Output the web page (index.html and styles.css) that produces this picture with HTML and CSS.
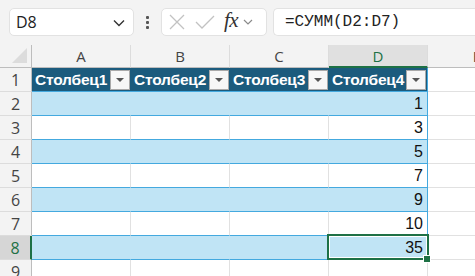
FILE: index.html
```html
<!DOCTYPE html>
<html lang="ru">
<head>
<meta charset="utf-8">
<link rel="stylesheet" href="styles.css">
</head>
<body>
<div class="toolbar">
  <div class="namebox">
    <span class="name">D8</span>
    <svg class="chev" width="12" height="8" viewBox="0 0 12 8"><path d="M1 1.5 L6 6.5 L11 1.5" fill="none" stroke="#333" stroke-width="1.4"/></svg>
  </div>
  <div class="dots"><i></i><i></i><i></i></div>
  <div class="fbtns">
    <svg width="16" height="16" viewBox="0 0 16 16"><path d="M1 1 L15 15 M15 1 L1 15" stroke="#c2c2c2" stroke-width="1.3" fill="none"/></svg>
    <svg width="20" height="16" viewBox="0 0 20 16"><path d="M1 8 L7 14 L19 2" stroke="#c2c2c2" stroke-width="1.3" fill="none"/></svg>
    <span class="fx">fx</span>
    <svg class="chev2" width="10" height="6" viewBox="0 0 10 6"><path d="M1 1 L5 5 L9 1" fill="none" stroke="#8a8a8a" stroke-width="1.2"/></svg>
  </div>
  <div class="formula">=СУММ(D2:D7)</div>
</div>
<div class="sheet">
  <div class="corner"><span class="tri"></span></div>
  <div class="ch">A</div><div class="ch">B</div><div class="ch">C</div><div class="ch sel">D</div><div class="ch">E</div>

  <div class="rh">1</div>
  <div class="th">Столбец1<span class="fb"></span></div>
  <div class="th">Столбец2<span class="fb"></span></div>
  <div class="th">Столбец3<span class="fb"></span></div>
  <div class="th last">Столбец4<span class="fb"></span></div>
  <div class="c"></div>

  <div class="rh">2</div>
  <div class="tc band"></div><div class="tc band"></div><div class="tc band"></div><div class="tc band last">1</div><div class="c"></div>

  <div class="rh">3</div>
  <div class="tc"></div><div class="tc"></div><div class="tc"></div><div class="tc last">3</div><div class="c"></div>

  <div class="rh">4</div>
  <div class="tc band"></div><div class="tc band"></div><div class="tc band"></div><div class="tc band last">5</div><div class="c"></div>

  <div class="rh">5</div>
  <div class="tc"></div><div class="tc"></div><div class="tc"></div><div class="tc last">7</div><div class="c"></div>

  <div class="rh">6</div>
  <div class="tc band"></div><div class="tc band"></div><div class="tc band"></div><div class="tc band last">9</div><div class="c"></div>

  <div class="rh">7</div>
  <div class="tc"></div><div class="tc"></div><div class="tc"></div><div class="tc last">10</div><div class="c"></div>

  <div class="rh rsel">8</div>
  <div class="tc band"></div><div class="tc band"></div><div class="tc band"></div><div class="tc band last active">35<span class="handle"></span></div><div class="c"></div>

  <div class="rh">9</div>
  <div class="c"></div><div class="c"></div><div class="c"></div><div class="c"></div><div class="c"></div>
</div>
</body>
</html>
```

FILE: styles.css
```css
html, body { margin: 0; padding: 0; }
body {
  width: 475px; height: 276px; overflow: hidden;
  background: #fff;
  font-family: "Liberation Sans", Arial, sans-serif;
}
.toolbar {
  height: 45px;
  background: #f3f3f3;
  display: flex;
  align-items: flex-start;
  padding-top: 8px;
  box-sizing: border-box;
}
.namebox {
  margin-left: 9px;
  width: 125px; height: 28px;
  box-sizing: border-box;
  background: #fff;
  border: 1px solid #e2e2e2;
  border-radius: 5px;
  display: flex; align-items: center; justify-content: space-between;
  padding: 0 8px 0 6px;
}
.name { font-family: "Open Sans", sans-serif; font-size: 16px; color: #222; }
.chev { margin-top: 1px; }
.dots {
  width: 27px; height: 28px;
  display: flex; flex-direction: column; align-items: center; justify-content: center; gap: 2px;
}
.dots i { display: block; width: 3px; height: 3px; background: #555; border-radius: 1px; }
.fbtns {
  width: 106px; height: 28px;
  box-sizing: border-box;
  background: #fff;
  border: 1px solid #e2e2e2;
  border-radius: 5px;
  display: flex; align-items: center;
  padding-left: 7px; gap: 10px;
}
.fx {
  font-family: "Liberation Serif", serif; font-style: italic;
  font-size: 21px; color: #333; margin-left: -1px; margin-top: -3px;
  letter-spacing: -0.5px;
}
.chev2 { margin-left: -5px; }
.formula {
  margin-left: 6px;
  flex: 1;
  height: 28px;
  box-sizing: border-box;
  background: #fff;
  border: 1px solid #e2e2e2;
  border-right: none;
  border-radius: 5px 0 0 5px;
  font-family: "Liberation Mono", monospace;
  font-size: 16px; color: #222;
  padding-left: 11px;
  line-height: 27px;
}
.sheet {
  display: grid;
  grid-template-columns: 32px 99px 99px 99px 99px 99px;
  grid-template-rows: 23px repeat(9, 24px);
}
.sheet > div { box-sizing: border-box; }
.corner {
  background: #f3f3f3;
  border-right: 1px solid #bdbdbd;
  border-bottom: 1px solid #bdbdbd;
  position: relative;
}
.tri {
  position: absolute; right: 4px; bottom: 4px;
  width: 0; height: 0;
  border-left: 15px solid transparent;
  border-bottom: 15px solid #dcdcdc;
}
.ch {
  background: #f3f3f3;
  border-right: 1px solid #dcdcdc;
  border-bottom: 1px solid #bdbdbd;
  font-family: "Open Sans", sans-serif;
  font-size: 15px; color: #444;
  text-align: center; line-height: 22px;
}
.ch.sel {
  background: #e0e0e0;
  color: #1e7145;
  border-bottom: 2px solid #1e7145;
}
.rh {
  background: #f3f3f3;
  border-right: 1px solid #bdbdbd;
  border-bottom: 1px solid #dcdcdc;
  font-family: "Open Sans", sans-serif;
  font-size: 16px; color: #444;
  text-align: center; line-height: 24px;
}
.rh.rsel {
  background: #d6d6d6;
  color: #1e7145;
  border-right: 2px solid #1e7145;
}
.c {
  border-right: 1px solid #e1e1e1;
  border-bottom: 1px solid #e1e1e1;
}
.th {
  background: #1b5b7d;
  border-bottom: 1px solid #44a9df;
  color: #fff;
  font-weight: bold;
  font-size: 15.5px;
  letter-spacing: -0.2px;
  display: flex; align-items: center; justify-content: space-between;
  padding: 0 1px 0 3px;
}
.th.last { border-right: 1px solid #44a9df; }
.fb {
  width: 20px; height: 20px;
  flex: none;
  box-sizing: border-box;
  background: #f7f7f7;
  border: 1px solid #a9a9a9;
  position: relative;
}
.fb::after {
  content: "";
  position: absolute; left: 5px; top: 7px;
  border-left: 4px solid transparent;
  border-right: 4px solid transparent;
  border-top: 4px solid #555;
}
.tc {
  border-right: 1px solid #e1e1e1;
  border-bottom: 1px solid #44a9df;
  font-size: 16px; color: #111;
  text-align: right; padding-right: 4px;
  line-height: 24px;
}
.tc.band { background: #c0e4f5; border-right-color: #c0e4f5; }
.tc.last { border-right: 1px solid #44a9df; }
.tc.active { position: relative; }
.tc.active::before {
  content: "";
  position: absolute; left: -2px; top: -2px; right: -2px; bottom: -1px;
  border: 2px solid #1e7145;
  box-shadow: inset 0 0 0 1px #fff;
}
.handle {
  position: absolute; right: -4px; bottom: -4px;
  width: 6px; height: 6px;
  background: #1e7145;
  border: 1px solid #fff;
}
```
